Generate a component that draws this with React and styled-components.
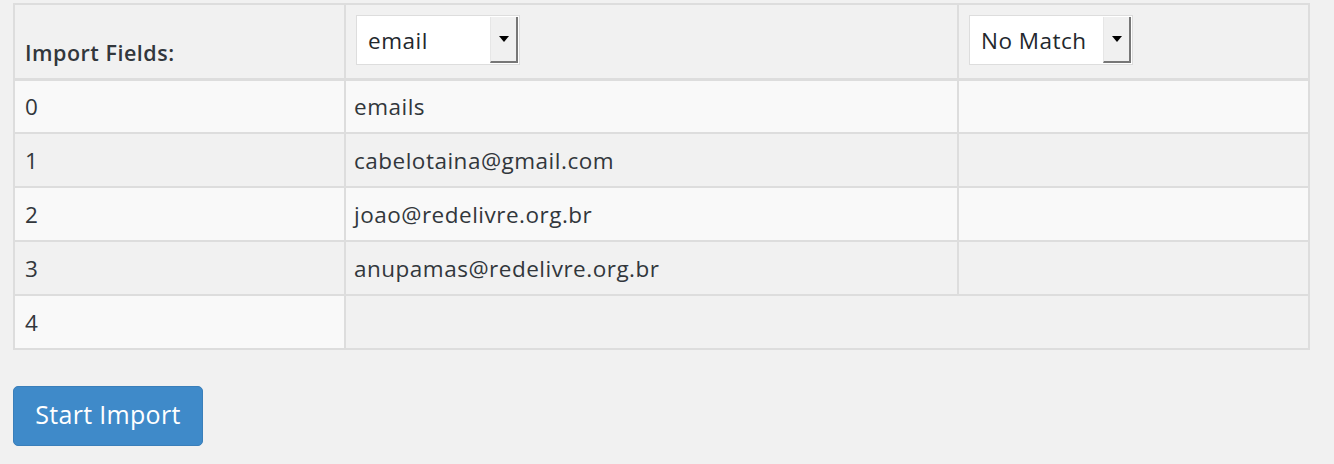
import React from 'react';
import styled, { createGlobalStyle } from 'styled-components';

const GlobalStyle = createGlobalStyle`
  html, body {
    margin: 0;
    padding: 0;
    background: #f1f1f1;
  }
  body {
    font-family: "Open Sans", "Liberation Sans", sans-serif;
    color: #32373c;
  }
`;

const Page = styled.div`
  padding: 3px 24px 0 13px;
  width: 1297px;
`;

const Table = styled.table`
  width: 1297px;
  border-collapse: collapse;
  border: 2px solid #dddddd;
  table-layout: fixed;
  font-size: 22.5px;
  letter-spacing: 0.5px;
`;

const HeadCell = styled.th`
  box-sizing: border-box;
  height: 75px;
  padding: 0 10px 11px;
  text-align: left;
  vertical-align: bottom;
  font-weight: 600;
  font-size: 21.5px;
  letter-spacing: 0.5px;
  border-right: 2px solid #dddddd;
  border-bottom: 3px solid #dddddd;
  background: #f1f1f1;
`;

const SelectCell = styled.th`
  box-sizing: border-box;
  height: 75px;
  padding: 0 10px;
  text-align: left;
  vertical-align: middle;
  font-weight: 400;
  border-right: 2px solid #dddddd;
  border-bottom: 3px solid #dddddd;
  background: #f1f1f1;
`;

const Select = styled.div`
  display: inline-flex;
  align-items: stretch;
  width: 164px;
  height: 50px;
  box-sizing: border-box;
  border: 1px solid #dddddd;
  background: #ffffff;
  padding: 1px;
  margin-top: -2px;
`;

const SelectValue = styled.span`
  flex: 1;
  display: flex;
  align-items: center;
  padding-left: 10px;
  font-size: 22.5px;
  letter-spacing: 0.5px;
  color: #23282d;
`;

const SelectArrow = styled.span`
  width: 28px;
  display: flex;
  align-items: center;
  justify-content: center;
  background: #f0f0f0;
  border-left: 1px solid #e6e6e6;
  border-right: 2px solid #777777;
  border-bottom: 2px solid #777777;
  box-sizing: border-box;

  &::after {
    content: "";
    border-left: 5px solid transparent;
    border-right: 5px solid transparent;
    border-top: 6px solid #000000;
  }
`;

const Row = styled.tr`
  background: ${({ $striped }) => ($striped ? '#f9f9f9' : 'transparent')};
`;

const Cell = styled.td`
  height: 54px;
  padding: 0 ${({ $pad }) => $pad || 10}px;
  box-sizing: border-box;
  vertical-align: middle;
  border-right: 2px solid #dddddd;
  border-bottom: 2px solid #dddddd;
  white-space: nowrap;
  background: ${({ $bg }) => $bg || 'inherit'};
`;

const Button = styled.button`
  margin-top: 36px;
  width: 190px;
  height: 60px;
  border: 1px solid #3a7fba;
  border-radius: 5px;
  background: #3f8ac9;
  color: #ffffff;
  font-family: "Open Sans", "Liberation Sans", sans-serif;
  font-size: 25px;
  letter-spacing: 0.3px;
  padding: 0 0 4px;
  cursor: pointer;
`;

const rows = [
  ['0', 'emails'],
  ['1', 'cabelotaina@gmail.com'],
  ['2', 'joao@redelivre.org.br'],
  ['3', 'anupamas@redelivre.org.br'],
];

const App = () => {
  return (
    <Page>
      <GlobalStyle />
      <Table>
        <colgroup>
          <col style={{ width: 331 }} />
          <col style={{ width: 613 }} />
          <col />
        </colgroup>
        <thead>
          <tr>
            <HeadCell>Import Fields:</HeadCell>
            <SelectCell>
              <Select>
                <SelectValue>email</SelectValue>
                <SelectArrow />
              </Select>
            </SelectCell>
            <SelectCell>
              <Select>
                <SelectValue>No Match</SelectValue>
                <SelectArrow />
              </Select>
            </SelectCell>
          </tr>
        </thead>
        <tbody>
          {rows.map(([index, value], i) => (
            <Row key={index} $striped={i % 2 === 0}>
              <Cell>{index}</Cell>
              <Cell $pad={8}>{value}</Cell>
              <Cell />
            </Row>
          ))}
          <Row>
            <Cell $bg="#f9f9f9">4</Cell>
            <Cell colSpan={2} />
          </Row>
        </tbody>
      </Table>
      <Button>Start Import</Button>
    </Page>
  );
};

export default App;
